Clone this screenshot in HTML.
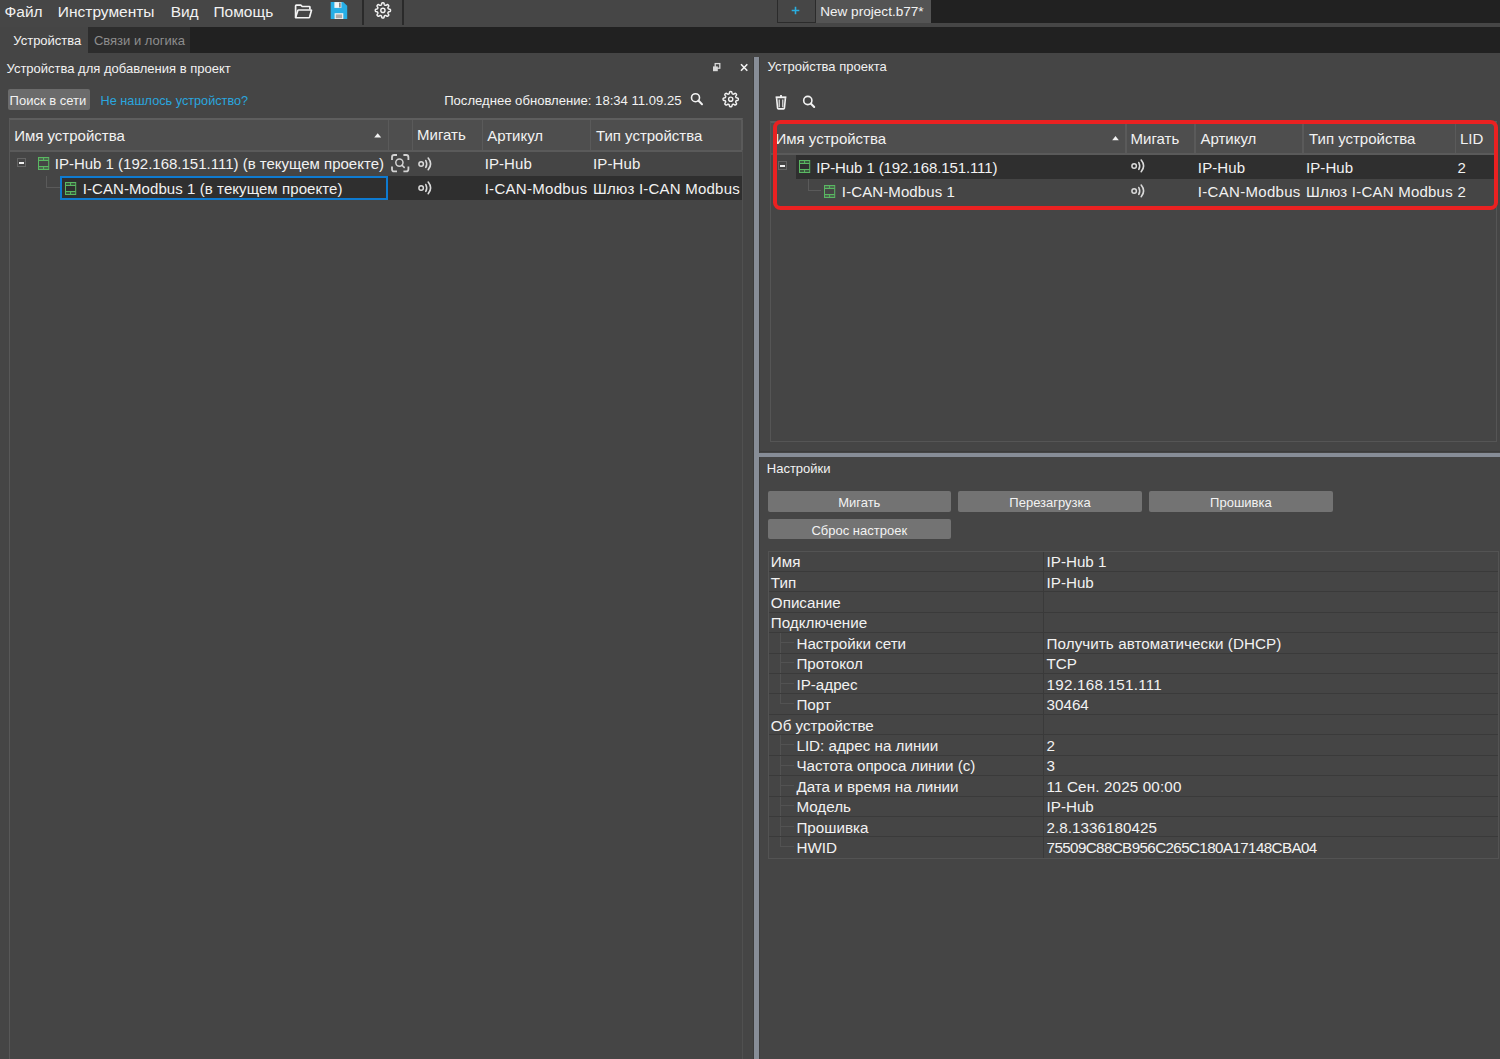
<!DOCTYPE html>
<html><head><meta charset="utf-8"><style>
html,body{margin:0;padding:0;width:1500px;height:1059px;overflow:hidden;background:#454545;}
body{position:relative;font-family:"Liberation Sans", sans-serif;}
body>div{position:absolute;}
.t{white-space:nowrap;}
</style></head><body>
<div style="left:0px;top:0px;width:1500px;height:27px;background:#464646;"></div>
<div style="left:931px;top:0px;width:569px;height:22.5px;background:#212121;"></div>
<div class="t" style="left:4.53px;top:3.78px;font-size:15.5px;line-height:15.5px;color:#f2f2f2;">Файл</div>
<div class="t" style="left:57.83px;top:3.78px;font-size:15.5px;line-height:15.5px;color:#f2f2f2;">Инструменты</div>
<div class="t" style="left:170.63px;top:3.78px;font-size:15.5px;line-height:15.5px;color:#f2f2f2;">Вид</div>
<div class="t" style="left:213.43px;top:3.78px;font-size:15.5px;line-height:15.5px;color:#f2f2f2;">Помощь</div>
<svg style="position:absolute;left:293px;top:2px;" width="21" height="18" viewBox="0 0 21 18"><g transform="translate(0,0.9) scale(1,0.93)"><path d="M2.6 15.6 V3.2 Q2.6 2.4 3.4 2.4 H7.8 L9.2 3.8 H16.2 Q16.9 3.8 16.9 4.5 V7.2" fill="none" stroke="#f4f4f4" stroke-width="1.7" stroke-linejoin="round"/><path d="M2.6 15.6 L4.8 8.2 Q5.0 7.6 5.6 7.6 H17.8 Q18.6 7.6 18.4 8.3 L16.6 15.2 Q16.4 15.9 15.7 15.9 H2.8 Z" fill="none" stroke="#f4f4f4" stroke-width="1.7" stroke-linejoin="round"/></g></svg>
<svg style="position:absolute;left:330px;top:1px;" width="18" height="19" viewBox="0 0 18 19"><path d="M0.7 1.1 H13.2 L17.2 4.8 V18 H0.7 Z" fill="#27aee6"/><rect x="4.4" y="1.1" width="7" height="5.8" fill="#f4f4f4"/><rect x="9.3" y="1.6" width="1.2" height="4.8" fill="#5a5a5a"/><rect x="4.6" y="12.2" width="8.7" height="5.8" fill="#f2f2f2"/><rect x="5.8" y="13.4" width="6.3" height="3.8" fill="#a9a9a9"/></svg>
<div style="left:362px;top:0px;width:2px;height:25px;background:#2a2a2a;"></div>
<svg style="position:absolute;left:372px;top:0px;" width="22" height="21" viewBox="0 0 22 21"><path d="M10.90 2.80 L11.10 2.81 L11.30 2.83 L11.49 2.88 L11.68 2.96 L11.86 3.11 L12.02 3.35 L12.14 3.72 L12.23 4.14 L12.32 4.50 L12.41 4.76 L12.52 4.92 L12.65 5.02 L12.78 5.10 L12.91 5.17 L13.04 5.23 L13.18 5.28 L13.32 5.33 L13.47 5.36 L13.63 5.37 L13.82 5.34 L14.07 5.23 L14.39 5.03 L14.75 4.80 L15.09 4.63 L15.38 4.56 L15.61 4.59 L15.80 4.66 L15.97 4.77 L16.13 4.89 L16.27 5.03 L16.41 5.17 L16.53 5.33 L16.64 5.50 L16.71 5.69 L16.74 5.92 L16.67 6.21 L16.50 6.55 L16.27 6.91 L16.07 7.23 L15.96 7.48 L15.93 7.67 L15.94 7.83 L15.97 7.98 L16.02 8.12 L16.07 8.26 L16.13 8.39 L16.20 8.52 L16.28 8.65 L16.38 8.78 L16.54 8.89 L16.80 8.98 L17.16 9.07 L17.58 9.16 L17.95 9.28 L18.19 9.44 L18.34 9.62 L18.42 9.81 L18.47 10.00 L18.49 10.20 L18.50 10.40 L18.49 10.60 L18.47 10.80 L18.42 10.99 L18.34 11.18 L18.19 11.36 L17.95 11.52 L17.58 11.64 L17.16 11.73 L16.80 11.82 L16.54 11.91 L16.38 12.02 L16.28 12.15 L16.20 12.28 L16.13 12.41 L16.07 12.54 L16.02 12.68 L15.97 12.82 L15.94 12.97 L15.93 13.13 L15.96 13.32 L16.07 13.57 L16.27 13.89 L16.50 14.25 L16.67 14.59 L16.74 14.88 L16.71 15.11 L16.64 15.30 L16.53 15.47 L16.41 15.63 L16.27 15.77 L16.13 15.91 L15.97 16.03 L15.80 16.14 L15.61 16.21 L15.38 16.24 L15.09 16.17 L14.75 16.00 L14.39 15.77 L14.07 15.57 L13.82 15.46 L13.63 15.43 L13.47 15.44 L13.32 15.47 L13.18 15.52 L13.04 15.57 L12.91 15.63 L12.78 15.70 L12.65 15.78 L12.52 15.88 L12.41 16.04 L12.32 16.30 L12.23 16.66 L12.14 17.08 L12.02 17.45 L11.86 17.69 L11.68 17.84 L11.49 17.92 L11.30 17.97 L11.10 17.99 L10.90 18.00 L10.70 17.99 L10.50 17.97 L10.31 17.92 L10.12 17.84 L9.94 17.69 L9.78 17.45 L9.66 17.08 L9.57 16.66 L9.48 16.30 L9.39 16.04 L9.28 15.88 L9.15 15.78 L9.02 15.70 L8.89 15.63 L8.76 15.57 L8.62 15.52 L8.48 15.47 L8.33 15.44 L8.17 15.43 L7.98 15.46 L7.73 15.57 L7.41 15.77 L7.05 16.00 L6.71 16.17 L6.42 16.24 L6.19 16.21 L6.00 16.14 L5.83 16.03 L5.67 15.91 L5.53 15.77 L5.39 15.63 L5.27 15.47 L5.16 15.30 L5.09 15.11 L5.06 14.88 L5.13 14.59 L5.30 14.25 L5.53 13.89 L5.73 13.57 L5.84 13.32 L5.87 13.13 L5.86 12.97 L5.83 12.82 L5.78 12.68 L5.73 12.54 L5.67 12.41 L5.60 12.28 L5.52 12.15 L5.42 12.02 L5.26 11.91 L5.00 11.82 L4.64 11.73 L4.22 11.64 L3.85 11.52 L3.61 11.36 L3.46 11.18 L3.38 10.99 L3.33 10.80 L3.31 10.60 L3.30 10.40 L3.31 10.20 L3.33 10.00 L3.38 9.81 L3.46 9.62 L3.61 9.44 L3.85 9.28 L4.22 9.16 L4.64 9.07 L5.00 8.98 L5.26 8.89 L5.42 8.78 L5.52 8.65 L5.60 8.52 L5.67 8.39 L5.73 8.26 L5.78 8.12 L5.83 7.98 L5.86 7.83 L5.87 7.67 L5.84 7.48 L5.73 7.23 L5.53 6.91 L5.30 6.55 L5.13 6.21 L5.06 5.92 L5.09 5.69 L5.16 5.50 L5.27 5.33 L5.39 5.17 L5.53 5.03 L5.67 4.89 L5.83 4.77 L6.00 4.66 L6.19 4.59 L6.42 4.56 L6.71 4.63 L7.05 4.80 L7.41 5.03 L7.73 5.23 L7.98 5.34 L8.17 5.37 L8.33 5.36 L8.48 5.33 L8.62 5.28 L8.76 5.23 L8.89 5.17 L9.02 5.10 L9.15 5.02 L9.28 4.92 L9.39 4.76 L9.48 4.50 L9.57 4.14 L9.66 3.72 L9.78 3.35 L9.94 3.11 L10.12 2.96 L10.31 2.88 L10.50 2.83 L10.70 2.81 L10.90 2.80Z" fill="none" stroke="#f2f2f2" stroke-width="1.5"/><circle cx="10.9" cy="10.4" r="2.1" fill="none" stroke="#f2f2f2" stroke-width="1.4"/></svg>
<div style="left:402px;top:0px;width:1.5px;height:25px;background:#2a2a2a;"></div>
<div style="left:777px;top:0px;width:38.5px;height:23px;background:#2b2b2b;"></div>
<div style="left:778px;top:0px;width:36.5px;height:22px;background:#464646;"></div>
<svg style="position:absolute;left:788px;top:3px;" width="15" height="15" viewBox="0 0 15 15"><path d="M7.5 3.7 V11.3 M3.7 7.5 H11.3" stroke="#2aaee0" stroke-width="1.6"/></svg>
<div style="left:816px;top:0px;width:115px;height:22.8px;background:#545454;"></div>
<div class="t" style="left:820.15px;top:4.89px;font-size:13.6px;line-height:13.6px;color:#f2f2f2;">New project.b77*</div>
<div style="left:0px;top:27px;width:1500px;height:26px;background:#212121;"></div>
<div style="left:0px;top:27px;width:88px;height:26px;background:#454545;"></div>
<div style="left:88px;top:27px;width:102px;height:26px;background:#2d2d2d;"></div>
<div class="t" style="left:13.30px;top:34.00px;font-size:13px;line-height:13px;color:#f2f2f2;">Устройства</div>
<div class="t" style="left:93.89px;top:34.00px;font-size:13px;line-height:13px;color:#8d8d8d;">Связи и логика</div>
<div class="t" style="left:6.50px;top:61.80px;font-size:13px;line-height:13px;color:#f2f2f2;">Устройства для добавления в проект</div>
<svg style="position:absolute;left:711px;top:62px;" width="11" height="12" viewBox="0 0 11 12"><rect x="4.2" y="1.6" width="4.6" height="4.6" fill="none" stroke="#d8d8d8" stroke-width="1.3"/><rect x="2" y="4.4" width="4.8" height="4.8" fill="#d8d8d8"/></svg>
<svg style="position:absolute;left:739px;top:62px;" width="11" height="11" viewBox="0 0 11 11"><path d="M2 2.2 L8.3 8.8 M8.3 2.2 L2 8.8" stroke="#f2f2f2" stroke-width="1.6"/></svg>
<div style="left:8.2px;top:89.3px;width:81.5px;height:21.200000000000003px;background:#6b6b6b;border-radius:2px;"></div>
<div class="t" style="left:9.59px;top:94.00px;font-size:13px;line-height:13px;color:#f2f2f2;">Поиск в сети</div>
<div class="t" style="left:100.61px;top:94.65px;font-size:12.7px;line-height:12.7px;color:#2aa6df;">Не нашлось устройство?</div>
<div class="t" style="left:444.18px;top:94.11px;font-size:13.1px;line-height:13.1px;color:#f2f2f2;">Последнее обновление: 18:34 11.09.25</div>
<svg style="position:absolute;left:688px;top:90px;" width="20" height="20" viewBox="0 0 20 20"><circle cx="7.5" cy="7.7" r="4" fill="none" stroke="#f2f2f2" stroke-width="1.6"/><path d="M10.38 10.58 L14 14.2" stroke="#f2f2f2" stroke-width="2" stroke-linecap="round"/></svg>
<svg style="position:absolute;left:720px;top:89px;" width="22" height="21" viewBox="0 0 22 21"><path d="M10.70 2.60 L10.90 2.61 L11.10 2.63 L11.29 2.68 L11.48 2.76 L11.66 2.91 L11.82 3.15 L11.94 3.52 L12.03 3.94 L12.12 4.30 L12.21 4.56 L12.32 4.72 L12.45 4.82 L12.58 4.90 L12.71 4.97 L12.84 5.03 L12.98 5.08 L13.12 5.13 L13.27 5.16 L13.43 5.17 L13.62 5.14 L13.87 5.03 L14.19 4.83 L14.55 4.60 L14.89 4.43 L15.18 4.36 L15.41 4.39 L15.60 4.46 L15.77 4.57 L15.93 4.69 L16.07 4.83 L16.21 4.97 L16.33 5.13 L16.44 5.30 L16.51 5.49 L16.54 5.72 L16.47 6.01 L16.30 6.35 L16.07 6.71 L15.87 7.03 L15.76 7.28 L15.73 7.47 L15.74 7.63 L15.77 7.78 L15.82 7.92 L15.87 8.06 L15.93 8.19 L16.00 8.32 L16.08 8.45 L16.18 8.58 L16.34 8.69 L16.60 8.78 L16.96 8.87 L17.38 8.96 L17.75 9.08 L17.99 9.24 L18.14 9.42 L18.22 9.61 L18.27 9.80 L18.29 10.00 L18.30 10.20 L18.29 10.40 L18.27 10.60 L18.22 10.79 L18.14 10.98 L17.99 11.16 L17.75 11.32 L17.38 11.44 L16.96 11.53 L16.60 11.62 L16.34 11.71 L16.18 11.82 L16.08 11.95 L16.00 12.08 L15.93 12.21 L15.87 12.34 L15.82 12.48 L15.77 12.62 L15.74 12.77 L15.73 12.93 L15.76 13.12 L15.87 13.37 L16.07 13.69 L16.30 14.05 L16.47 14.39 L16.54 14.68 L16.51 14.91 L16.44 15.10 L16.33 15.27 L16.21 15.43 L16.07 15.57 L15.93 15.71 L15.77 15.83 L15.60 15.94 L15.41 16.01 L15.18 16.04 L14.89 15.97 L14.55 15.80 L14.19 15.57 L13.87 15.37 L13.62 15.26 L13.43 15.23 L13.27 15.24 L13.12 15.27 L12.98 15.32 L12.84 15.37 L12.71 15.43 L12.58 15.50 L12.45 15.58 L12.32 15.68 L12.21 15.84 L12.12 16.10 L12.03 16.46 L11.94 16.88 L11.82 17.25 L11.66 17.49 L11.48 17.64 L11.29 17.72 L11.10 17.77 L10.90 17.79 L10.70 17.80 L10.50 17.79 L10.30 17.77 L10.11 17.72 L9.92 17.64 L9.74 17.49 L9.58 17.25 L9.46 16.88 L9.37 16.46 L9.28 16.10 L9.19 15.84 L9.08 15.68 L8.95 15.58 L8.82 15.50 L8.69 15.43 L8.56 15.37 L8.42 15.32 L8.28 15.27 L8.13 15.24 L7.97 15.23 L7.78 15.26 L7.53 15.37 L7.21 15.57 L6.85 15.80 L6.51 15.97 L6.22 16.04 L5.99 16.01 L5.80 15.94 L5.63 15.83 L5.47 15.71 L5.33 15.57 L5.19 15.43 L5.07 15.27 L4.96 15.10 L4.89 14.91 L4.86 14.68 L4.93 14.39 L5.10 14.05 L5.33 13.69 L5.53 13.37 L5.64 13.12 L5.67 12.93 L5.66 12.77 L5.63 12.62 L5.58 12.48 L5.53 12.34 L5.47 12.21 L5.40 12.08 L5.32 11.95 L5.22 11.82 L5.06 11.71 L4.80 11.62 L4.44 11.53 L4.02 11.44 L3.65 11.32 L3.41 11.16 L3.26 10.98 L3.18 10.79 L3.13 10.60 L3.11 10.40 L3.10 10.20 L3.11 10.00 L3.13 9.80 L3.18 9.61 L3.26 9.42 L3.41 9.24 L3.65 9.08 L4.02 8.96 L4.44 8.87 L4.80 8.78 L5.06 8.69 L5.22 8.58 L5.32 8.45 L5.40 8.32 L5.47 8.19 L5.53 8.06 L5.58 7.92 L5.63 7.78 L5.66 7.63 L5.67 7.47 L5.64 7.28 L5.53 7.03 L5.33 6.71 L5.10 6.35 L4.93 6.01 L4.86 5.72 L4.89 5.49 L4.96 5.30 L5.07 5.13 L5.19 4.97 L5.33 4.83 L5.47 4.69 L5.63 4.57 L5.80 4.46 L5.99 4.39 L6.22 4.36 L6.51 4.43 L6.85 4.60 L7.21 4.83 L7.53 5.03 L7.78 5.14 L7.97 5.17 L8.13 5.16 L8.28 5.13 L8.42 5.08 L8.56 5.03 L8.69 4.97 L8.82 4.90 L8.95 4.82 L9.08 4.72 L9.19 4.56 L9.28 4.30 L9.37 3.94 L9.46 3.52 L9.58 3.15 L9.74 2.91 L9.92 2.76 L10.11 2.68 L10.30 2.63 L10.50 2.61 L10.70 2.60Z" fill="none" stroke="#f2f2f2" stroke-width="1.5"/><circle cx="10.7" cy="10.2" r="2.1" fill="none" stroke="#f2f2f2" stroke-width="1.4"/></svg>
<div style="left:9px;top:118px;width:734px;height:941px;background:#454545;border-left:1px solid #585858;border-top:2px solid #5e5e5e;border-right:1px solid #505050;box-sizing:border-box;"></div>
<div style="left:10px;top:120px;width:732px;height:31px;background:#4e4e4e;"></div>
<div style="left:10px;top:150px;width:732px;height:1.5px;background:#5a5a5a;"></div>
<div style="left:387.5px;top:119.5px;width:1.5px;height:30.5px;background:#5a5a5a;"></div>
<div style="left:411.5px;top:119.5px;width:1.5px;height:30.5px;background:#5a5a5a;"></div>
<div style="left:481.5px;top:119.5px;width:1.5px;height:30.5px;background:#5a5a5a;"></div>
<div style="left:589.5px;top:119.5px;width:1.5px;height:30.5px;background:#5a5a5a;"></div>
<div style="left:741px;top:119.5px;width:1.5px;height:30.5px;background:#5a5a5a;"></div>
<div class="t" style="left:14.16px;top:128.10px;font-size:15px;line-height:15px;color:#f2f2f2;">Имя устройства</div>
<svg style="position:absolute;left:372px;top:131px;" width="11" height="8" viewBox="0 0 11 8"><path d="M2.2 6.5 L5.7 2.2 L9.2 6.5 Z" fill="#f2f2f2"/></svg>
<div class="t" style="left:417.06px;top:127.40px;font-size:15px;line-height:15px;color:#f2f2f2;">Мигать</div>
<div class="t" style="left:487.20px;top:127.60px;font-size:15px;line-height:15px;color:#f2f2f2;">Артикул</div>
<div class="t" style="left:595.90px;top:127.60px;font-size:15px;line-height:15px;color:#f2f2f2;">Тип устройства</div>
<div style="left:16.6px;top:158.2px;width:9.0px;height:9.199999999999989px;background:transparent;border:1px solid #646464;box-sizing:border-box;"></div>
<div style="left:18.8px;top:162.0px;width:4.800000000000001px;height:1.799999999999983px;background:#f0f0f0;"></div>
<svg style="position:absolute;left:38px;top:157px;" width="12" height="14" viewBox="0 0 12 14"><rect x="1" y="1" width="9" height="2.5" fill="#5ab862" fill-opacity="0.3"/><rect x="1" y="10" width="9" height="2" fill="#5ab862" fill-opacity="0.3"/><rect x="0.5" y="0.5" width="10.2" height="12" fill="none" stroke="#5ab862" stroke-width="1"/><path d="M0.5 3.5 H10.7 M0.5 9.5 H10.7 M5.6 0.5 V3.5 M5.6 9.5 V12.5" stroke="#5ab862" stroke-width="1"/></svg>
<div class="t" style="left:54.76px;top:156.20px;font-size:15px;line-height:15px;color:#f2f2f2;">IP-Hub 1 (192.168.151.111) (в текущем проекте)</div>
<svg style="position:absolute;left:391.3px;top:154.2px;" width="19" height="19" viewBox="0 0 19 19"><path d="M1 6 V3.2 Q1 1 3.2 1 H6 M12.4 1 H15.2 Q17.4 1 17.4 3.2 V6 M17.4 12.4 V15.2 Q17.4 17.4 15.2 17.4 H12.4 M6 17.4 H3.2 Q1 17.4 1 15.2 V12.4" fill="none" stroke="#d2d2d2" stroke-width="1.8"/><circle cx="8.4" cy="8.6" r="3.6" fill="none" stroke="#d2d2d2" stroke-width="1.5"/><path d="M11 11.2 L13.2 13.4" stroke="#d2d2d2" stroke-width="1.6" stroke-linecap="round"/></svg>
<svg style="position:absolute;left:416.9px;top:155.6px;" width="17" height="16" viewBox="0 0 17 16"><circle cx="4.15" cy="7.9" r="2.25" fill="none" stroke="#dadada" stroke-width="1.5"/><path d="M8.8 4.5 Q10.6 7.9 8.8 11.4" fill="none" stroke="#dadada" stroke-width="1.6" stroke-linecap="round"/><path d="M11.2 2.0 Q16.0 7.9 11.2 13.7" fill="none" stroke="#dadada" stroke-width="1.6" stroke-linecap="round"/></svg>
<div class="t" style="left:484.66px;top:156.40px;font-size:15px;line-height:15px;color:#f2f2f2;letter-spacing:0.1px;">IP-Hub</div>
<div class="t" style="left:593.06px;top:156.40px;font-size:15px;line-height:15px;color:#f2f2f2;letter-spacing:0.1px;">IP-Hub</div>
<div style="left:60.4px;top:176px;width:681.6px;height:24.30000000000001px;background:#2f2f2f;"></div>
<div style="left:60.4px;top:176px;width:327.6px;height:24.30000000000001px;background:transparent;border:2px solid #0e7bd1;box-sizing:border-box;"></div>
<div style="left:46.2px;top:176px;width:1.0px;height:11.5px;background:#5a5a5a;"></div>
<div style="left:46.2px;top:187px;width:14.199999999999996px;height:1px;background:#5a5a5a;"></div>
<svg style="position:absolute;left:65px;top:182px;" width="12" height="14" viewBox="0 0 12 14"><rect x="1" y="1" width="9" height="2.5" fill="#5ab862" fill-opacity="0.3"/><rect x="1" y="10" width="9" height="2" fill="#5ab862" fill-opacity="0.3"/><rect x="0.5" y="0.5" width="10.2" height="12" fill="none" stroke="#5ab862" stroke-width="1"/><path d="M0.5 3.5 H10.7 M0.5 9.5 H10.7 M5.6 0.5 V3.5 M5.6 9.5 V12.5" stroke="#5ab862" stroke-width="1"/></svg>
<div class="t" style="left:82.66px;top:180.80px;font-size:15px;line-height:15px;color:#f2f2f2;letter-spacing:0.08px;">I-CAN-Modbus 1 (в текущем проекте)</div>
<svg style="position:absolute;left:416.9px;top:180.2px;" width="17" height="16" viewBox="0 0 17 16"><circle cx="4.15" cy="7.9" r="2.25" fill="none" stroke="#dadada" stroke-width="1.5"/><path d="M8.8 4.5 Q10.6 7.9 8.8 11.4" fill="none" stroke="#dadada" stroke-width="1.6" stroke-linecap="round"/><path d="M11.2 2.0 Q16.0 7.9 11.2 13.7" fill="none" stroke="#dadada" stroke-width="1.6" stroke-linecap="round"/></svg>
<div class="t" style="left:484.66px;top:180.80px;font-size:15px;line-height:15px;color:#f2f2f2;letter-spacing:0.3px;">I-CAN-Modbus</div>
<div class="t" style="left:593.06px;top:180.80px;font-size:15px;line-height:15px;color:#f2f2f2;letter-spacing:0.22px;">Шлюз I-CAN Modbus</div>
<div style="left:753px;top:57px;width:1px;height:1002px;background:#3c3c3c;"></div>
<div style="left:754px;top:57px;width:4.5px;height:1002px;background:#878d97;"></div>
<div style="left:758.5px;top:57px;width:1.0px;height:1002px;background:#3c3c3c;"></div>
<div class="t" style="left:767.60px;top:59.70px;font-size:13px;line-height:13px;color:#f2f2f2;">Устройства проекта</div>
<svg style="position:absolute;left:773px;top:93px;" width="16" height="18" viewBox="0 0 16 18"><path d="M3.6 5.2 L4.6 15.2 Q4.7 15.9 5.4 15.9 H10.6 Q11.3 15.9 11.4 15.2 L12.4 5.2" fill="none" stroke="#f2f2f2" stroke-width="1.6"/><path d="M2.6 4.3 H13.4" stroke="#f2f2f2" stroke-width="1.9"/><path d="M8 2 V4" stroke="#f2f2f2" stroke-width="1.8"/><path d="M6.2 6.4 V14.2 M9.8 6.4 V14.2" stroke="#f2f2f2" stroke-width="1.1"/></svg>
<svg style="position:absolute;left:800px;top:93px;" width="20" height="20" viewBox="0 0 20 20"><circle cx="7.8" cy="7.5" r="4.1" fill="none" stroke="#f2f2f2" stroke-width="1.6"/><path d="M10.75 10.45 L14.2 14" stroke="#f2f2f2" stroke-width="2" stroke-linecap="round"/></svg>
<div style="left:770px;top:121px;width:727px;height:320.5px;background:#454545;border:1px solid #555555;border-top:2px solid #5e5e5e;box-sizing:border-box;"></div>
<div style="left:771px;top:123px;width:725px;height:30.5px;background:#4e4e4e;"></div>
<div style="left:771px;top:153px;width:725px;height:1.5px;background:#5a5a5a;"></div>
<div style="left:1125.2px;top:122px;width:1.5px;height:31px;background:#5a5a5a;"></div>
<div style="left:1194.3px;top:122px;width:1.5px;height:31px;background:#5a5a5a;"></div>
<div style="left:1302.3px;top:122px;width:1.5px;height:31px;background:#5a5a5a;"></div>
<div style="left:1454.7px;top:122px;width:1.5px;height:31px;background:#5a5a5a;"></div>
<div class="t" style="left:775.46px;top:130.90px;font-size:15px;line-height:15px;color:#f2f2f2;">Имя устройства</div>
<svg style="position:absolute;left:1110px;top:134px;" width="11" height="8" viewBox="0 0 11 8"><path d="M2.2 6.3 L5.5 2.1 L8.8 6.3 Z" fill="#f2f2f2"/></svg>
<div class="t" style="left:1130.56px;top:130.70px;font-size:15px;line-height:15px;color:#f2f2f2;">Мигать</div>
<div class="t" style="left:1200.40px;top:130.70px;font-size:15px;line-height:15px;color:#f2f2f2;">Артикул</div>
<div class="t" style="left:1309.00px;top:130.70px;font-size:15px;line-height:15px;color:#f2f2f2;">Тип устройства</div>
<div class="t" style="left:1459.96px;top:130.70px;font-size:15px;line-height:15px;color:#f2f2f2;">LID</div>
<div style="left:796px;top:154.5px;width:700px;height:24.099999999999994px;background:#2f2f2f;"></div>
<div style="left:778.2px;top:161px;width:9.0px;height:9.199999999999989px;background:transparent;border:1px solid #646464;box-sizing:border-box;"></div>
<div style="left:780.4000000000001px;top:164.8px;width:4.7999999999999545px;height:1.799999999999983px;background:#f0f0f0;"></div>
<svg style="position:absolute;left:799px;top:160px;" width="12" height="14" viewBox="0 0 12 14"><rect x="1" y="1" width="9" height="2.5" fill="#5ab862" fill-opacity="0.3"/><rect x="1" y="10" width="9" height="2" fill="#5ab862" fill-opacity="0.3"/><rect x="0.5" y="0.5" width="10.2" height="12" fill="none" stroke="#5ab862" stroke-width="1"/><path d="M0.5 3.5 H10.7 M0.5 9.5 H10.7 M5.6 0.5 V3.5 M5.6 9.5 V12.5" stroke="#5ab862" stroke-width="1"/></svg>
<div class="t" style="left:816.26px;top:159.60px;font-size:15px;line-height:15px;color:#f2f2f2;letter-spacing:-0.1px;">IP-Hub 1 (192.168.151.111)</div>
<svg style="position:absolute;left:1129.9px;top:158.4px;" width="17" height="16" viewBox="0 0 17 16"><circle cx="4.15" cy="7.9" r="2.25" fill="none" stroke="#dadada" stroke-width="1.5"/><path d="M8.8 4.5 Q10.6 7.9 8.8 11.4" fill="none" stroke="#dadada" stroke-width="1.6" stroke-linecap="round"/><path d="M11.2 2.0 Q16.0 7.9 11.2 13.7" fill="none" stroke="#dadada" stroke-width="1.6" stroke-linecap="round"/></svg>
<div class="t" style="left:1197.86px;top:159.60px;font-size:15px;line-height:15px;color:#f2f2f2;letter-spacing:0.1px;">IP-Hub</div>
<div class="t" style="left:1305.96px;top:159.60px;font-size:15px;line-height:15px;color:#f2f2f2;letter-spacing:0.1px;">IP-Hub</div>
<div class="t" style="left:1457.56px;top:159.60px;font-size:15px;line-height:15px;color:#f2f2f2;">2</div>
<div style="left:808px;top:178.6px;width:1px;height:12.400000000000006px;background:#5a5a5a;"></div>
<div style="left:808px;top:190.4px;width:13.200000000000045px;height:1.0px;background:#5a5a5a;"></div>
<svg style="position:absolute;left:824px;top:185px;" width="12" height="14" viewBox="0 0 12 14"><rect x="1" y="1" width="9" height="2.5" fill="#5ab862" fill-opacity="0.3"/><rect x="1" y="10" width="9" height="2" fill="#5ab862" fill-opacity="0.3"/><rect x="0.5" y="0.5" width="10.2" height="12" fill="none" stroke="#5ab862" stroke-width="1"/><path d="M0.5 3.5 H10.7 M0.5 9.5 H10.7 M5.6 0.5 V3.5 M5.6 9.5 V12.5" stroke="#5ab862" stroke-width="1"/></svg>
<div class="t" style="left:841.86px;top:184.00px;font-size:15px;line-height:15px;color:#f2f2f2;letter-spacing:0.1px;">I-CAN-Modbus 1</div>
<svg style="position:absolute;left:1129.9px;top:183px;" width="17" height="16" viewBox="0 0 17 16"><circle cx="4.15" cy="7.9" r="2.25" fill="none" stroke="#dadada" stroke-width="1.5"/><path d="M8.8 4.5 Q10.6 7.9 8.8 11.4" fill="none" stroke="#dadada" stroke-width="1.6" stroke-linecap="round"/><path d="M11.2 2.0 Q16.0 7.9 11.2 13.7" fill="none" stroke="#dadada" stroke-width="1.6" stroke-linecap="round"/></svg>
<div class="t" style="left:1197.86px;top:184.00px;font-size:15px;line-height:15px;color:#f2f2f2;letter-spacing:0.3px;">I-CAN-Modbus</div>
<div class="t" style="left:1305.96px;top:184.00px;font-size:15px;line-height:15px;color:#f2f2f2;letter-spacing:0.22px;">Шлюз I-CAN Modbus</div>
<div class="t" style="left:1457.56px;top:184.00px;font-size:15px;line-height:15px;color:#f2f2f2;">2</div>
<div style="left:773px;top:119.6px;width:725px;height:90.6px;background:transparent;border:4px solid #ea2121;border-radius:7.5px;box-sizing:border-box;"></div>
<div style="left:759.5px;top:451px;width:740.5px;height:1px;background:#3c3c3c;"></div>
<div style="left:758.5px;top:452.5px;width:741.5px;height:4.300000000000011px;background:#878d97;"></div>
<div class="t" style="left:766.79px;top:462.20px;font-size:13px;line-height:13px;color:#f2f2f2;">Настройки</div>
<div style="left:767.6px;top:491.1px;width:183.39999999999998px;height:20.5px;background:#737373;border-radius:2px;"></div>
<div class="t" style="left:767.6px;top:495.60px;width:183.39999999999998px;text-align:center;font-size:13px;line-height:13px;color:#f2f2f2;">Мигать</div>
<div style="left:958.4px;top:491.1px;width:183.39999999999998px;height:20.5px;background:#737373;border-radius:2px;"></div>
<div class="t" style="left:958.4px;top:495.60px;width:183.39999999999998px;text-align:center;font-size:13px;line-height:13px;color:#f2f2f2;">Перезагрузка</div>
<div style="left:1149.2px;top:491.1px;width:183.39999999999986px;height:20.5px;background:#737373;border-radius:2px;"></div>
<div class="t" style="left:1149.2px;top:495.60px;width:183.39999999999986px;text-align:center;font-size:13px;line-height:13px;color:#f2f2f2;">Прошивка</div>
<div style="left:767.6px;top:519px;width:183.39999999999998px;height:19.799999999999955px;background:#737373;border-radius:2px;"></div>
<div class="t" style="left:767.6px;top:523.50px;width:183.39999999999998px;text-align:center;font-size:13px;line-height:13px;color:#f2f2f2;">Сброс настроек</div>
<div style="left:768px;top:550.5px;width:731px;height:308.20000000000005px;background:#454545;border:1px solid #535353;box-sizing:border-box;"></div>
<div style="left:780.4px;top:632.1800000000001px;width:1.0px;height:20.41999999999996px;background:#525252;"></div>
<div style="left:780.4px;top:641.98px;width:13.300000000000068px;height:1.0px;background:#525252;"></div>
<div style="left:780.4px;top:652.6px;width:1.0px;height:20.41999999999996px;background:#525252;"></div>
<div style="left:780.4px;top:662.4px;width:13.300000000000068px;height:1.0px;background:#525252;"></div>
<div style="left:780.4px;top:673.02px;width:1.0px;height:20.41999999999996px;background:#525252;"></div>
<div style="left:780.4px;top:682.8199999999999px;width:13.300000000000068px;height:1.0px;background:#525252;"></div>
<div style="left:780.4px;top:693.44px;width:1.0px;height:10.5px;background:#525252;"></div>
<div style="left:780.4px;top:703.24px;width:13.300000000000068px;height:1.0px;background:#525252;"></div>
<div style="left:780.4px;top:734.28px;width:1.0px;height:20.41999999999996px;background:#525252;"></div>
<div style="left:780.4px;top:744.0799999999999px;width:13.300000000000068px;height:1.0px;background:#525252;"></div>
<div style="left:780.4px;top:754.7px;width:1.0px;height:20.41999999999996px;background:#525252;"></div>
<div style="left:780.4px;top:764.5px;width:13.300000000000068px;height:1.0px;background:#525252;"></div>
<div style="left:780.4px;top:775.12px;width:1.0px;height:20.41999999999996px;background:#525252;"></div>
<div style="left:780.4px;top:784.92px;width:13.300000000000068px;height:1.0px;background:#525252;"></div>
<div style="left:780.4px;top:795.54px;width:1.0px;height:20.41999999999996px;background:#525252;"></div>
<div style="left:780.4px;top:805.3399999999999px;width:13.300000000000068px;height:1.0px;background:#525252;"></div>
<div style="left:780.4px;top:815.96px;width:1.0px;height:20.41999999999996px;background:#525252;"></div>
<div style="left:780.4px;top:825.76px;width:13.300000000000068px;height:1.0px;background:#525252;"></div>
<div style="left:780.4px;top:836.38px;width:1.0px;height:10.5px;background:#525252;"></div>
<div style="left:780.4px;top:846.18px;width:13.300000000000068px;height:1.0px;background:#525252;"></div>
<div class="t" style="left:770.85px;top:554.23px;font-size:15.2px;line-height:15.2px;color:#f2f2f2;">Имя</div>
<div class="t" style="left:1046.55px;top:554.23px;font-size:15.2px;line-height:15.2px;color:#f2f2f2;">IP-Hub 1</div>
<div style="left:769px;top:570.92px;width:729px;height:1.0px;background:#3a3a3a;"></div>
<div class="t" style="left:770.85px;top:574.65px;font-size:15.2px;line-height:15.2px;color:#f2f2f2;">Тип</div>
<div class="t" style="left:1046.55px;top:574.65px;font-size:15.2px;line-height:15.2px;color:#f2f2f2;">IP-Hub</div>
<div style="left:769px;top:591.34px;width:729px;height:1.0px;background:#3a3a3a;"></div>
<div class="t" style="left:770.85px;top:595.07px;font-size:15.2px;line-height:15.2px;color:#f2f2f2;">Описание</div>
<div style="left:769px;top:611.76px;width:729px;height:1.0px;background:#3a3a3a;"></div>
<div class="t" style="left:770.85px;top:615.49px;font-size:15.2px;line-height:15.2px;color:#f2f2f2;">Подключение</div>
<div style="left:769px;top:632.1800000000001px;width:729px;height:1.0px;background:#3a3a3a;"></div>
<div class="t" style="left:796.45px;top:635.91px;font-size:15.2px;line-height:15.2px;color:#f2f2f2;">Настройки сети</div>
<div class="t" style="left:1046.55px;top:635.91px;font-size:15.2px;line-height:15.2px;color:#f2f2f2;letter-spacing:0.07px;">Получить автоматически (DHCP)</div>
<div style="left:769px;top:652.6px;width:729px;height:1.0px;background:#3a3a3a;"></div>
<div class="t" style="left:796.45px;top:656.33px;font-size:15.2px;line-height:15.2px;color:#f2f2f2;">Протокол</div>
<div class="t" style="left:1046.55px;top:656.33px;font-size:15.2px;line-height:15.2px;color:#f2f2f2;">TCP</div>
<div style="left:769px;top:673.02px;width:729px;height:1.0px;background:#3a3a3a;"></div>
<div class="t" style="left:796.45px;top:676.75px;font-size:15.2px;line-height:15.2px;color:#f2f2f2;">IP-адрес</div>
<div class="t" style="left:1046.55px;top:676.75px;font-size:15.2px;line-height:15.2px;color:#f2f2f2;letter-spacing:0.25px;">192.168.151.111</div>
<div style="left:769px;top:693.44px;width:729px;height:1.0px;background:#3a3a3a;"></div>
<div class="t" style="left:796.45px;top:697.17px;font-size:15.2px;line-height:15.2px;color:#f2f2f2;">Порт</div>
<div class="t" style="left:1046.55px;top:697.17px;font-size:15.2px;line-height:15.2px;color:#f2f2f2;">30464</div>
<div style="left:769px;top:713.86px;width:729px;height:1.0px;background:#3a3a3a;"></div>
<div class="t" style="left:770.85px;top:717.59px;font-size:15.2px;line-height:15.2px;color:#f2f2f2;">Об устройстве</div>
<div style="left:769px;top:734.28px;width:729px;height:1.0px;background:#3a3a3a;"></div>
<div class="t" style="left:796.45px;top:738.01px;font-size:15.2px;line-height:15.2px;color:#f2f2f2;">LID: адрес на линии</div>
<div class="t" style="left:1046.55px;top:738.01px;font-size:15.2px;line-height:15.2px;color:#f2f2f2;">2</div>
<div style="left:769px;top:754.7px;width:729px;height:1.0px;background:#3a3a3a;"></div>
<div class="t" style="left:796.45px;top:758.43px;font-size:15.2px;line-height:15.2px;color:#f2f2f2;">Частота опроса линии (с)</div>
<div class="t" style="left:1046.55px;top:758.43px;font-size:15.2px;line-height:15.2px;color:#f2f2f2;">3</div>
<div style="left:769px;top:775.12px;width:729px;height:1.0px;background:#3a3a3a;"></div>
<div class="t" style="left:796.45px;top:778.85px;font-size:15.2px;line-height:15.2px;color:#f2f2f2;">Дата и время на линии</div>
<div class="t" style="left:1046.55px;top:778.85px;font-size:15.2px;line-height:15.2px;color:#f2f2f2;letter-spacing:0.15px;">11 Сен. 2025 00:00</div>
<div style="left:769px;top:795.54px;width:729px;height:1.0px;background:#3a3a3a;"></div>
<div class="t" style="left:796.45px;top:799.27px;font-size:15.2px;line-height:15.2px;color:#f2f2f2;">Модель</div>
<div class="t" style="left:1046.55px;top:799.27px;font-size:15.2px;line-height:15.2px;color:#f2f2f2;">IP-Hub</div>
<div style="left:769px;top:815.96px;width:729px;height:1.0px;background:#3a3a3a;"></div>
<div class="t" style="left:796.45px;top:819.69px;font-size:15.2px;line-height:15.2px;color:#f2f2f2;">Прошивка</div>
<div class="t" style="left:1046.55px;top:819.69px;font-size:15.2px;line-height:15.2px;color:#f2f2f2;letter-spacing:0.05px;">2.8.1336180425</div>
<div style="left:769px;top:836.38px;width:729px;height:1.0px;background:#3a3a3a;"></div>
<div class="t" style="left:796.45px;top:840.11px;font-size:15.2px;line-height:15.2px;color:#f2f2f2;">HWID</div>
<div class="t" style="left:1046.55px;top:840.11px;font-size:15.2px;line-height:15.2px;color:#f2f2f2;letter-spacing:-0.61px;">75509C88CB956C265C180A17148CBA04</div>
<div style="left:1043px;top:551.5px;width:1px;height:306.20000000000005px;background:#3a3a3a;"></div>
</body></html>
